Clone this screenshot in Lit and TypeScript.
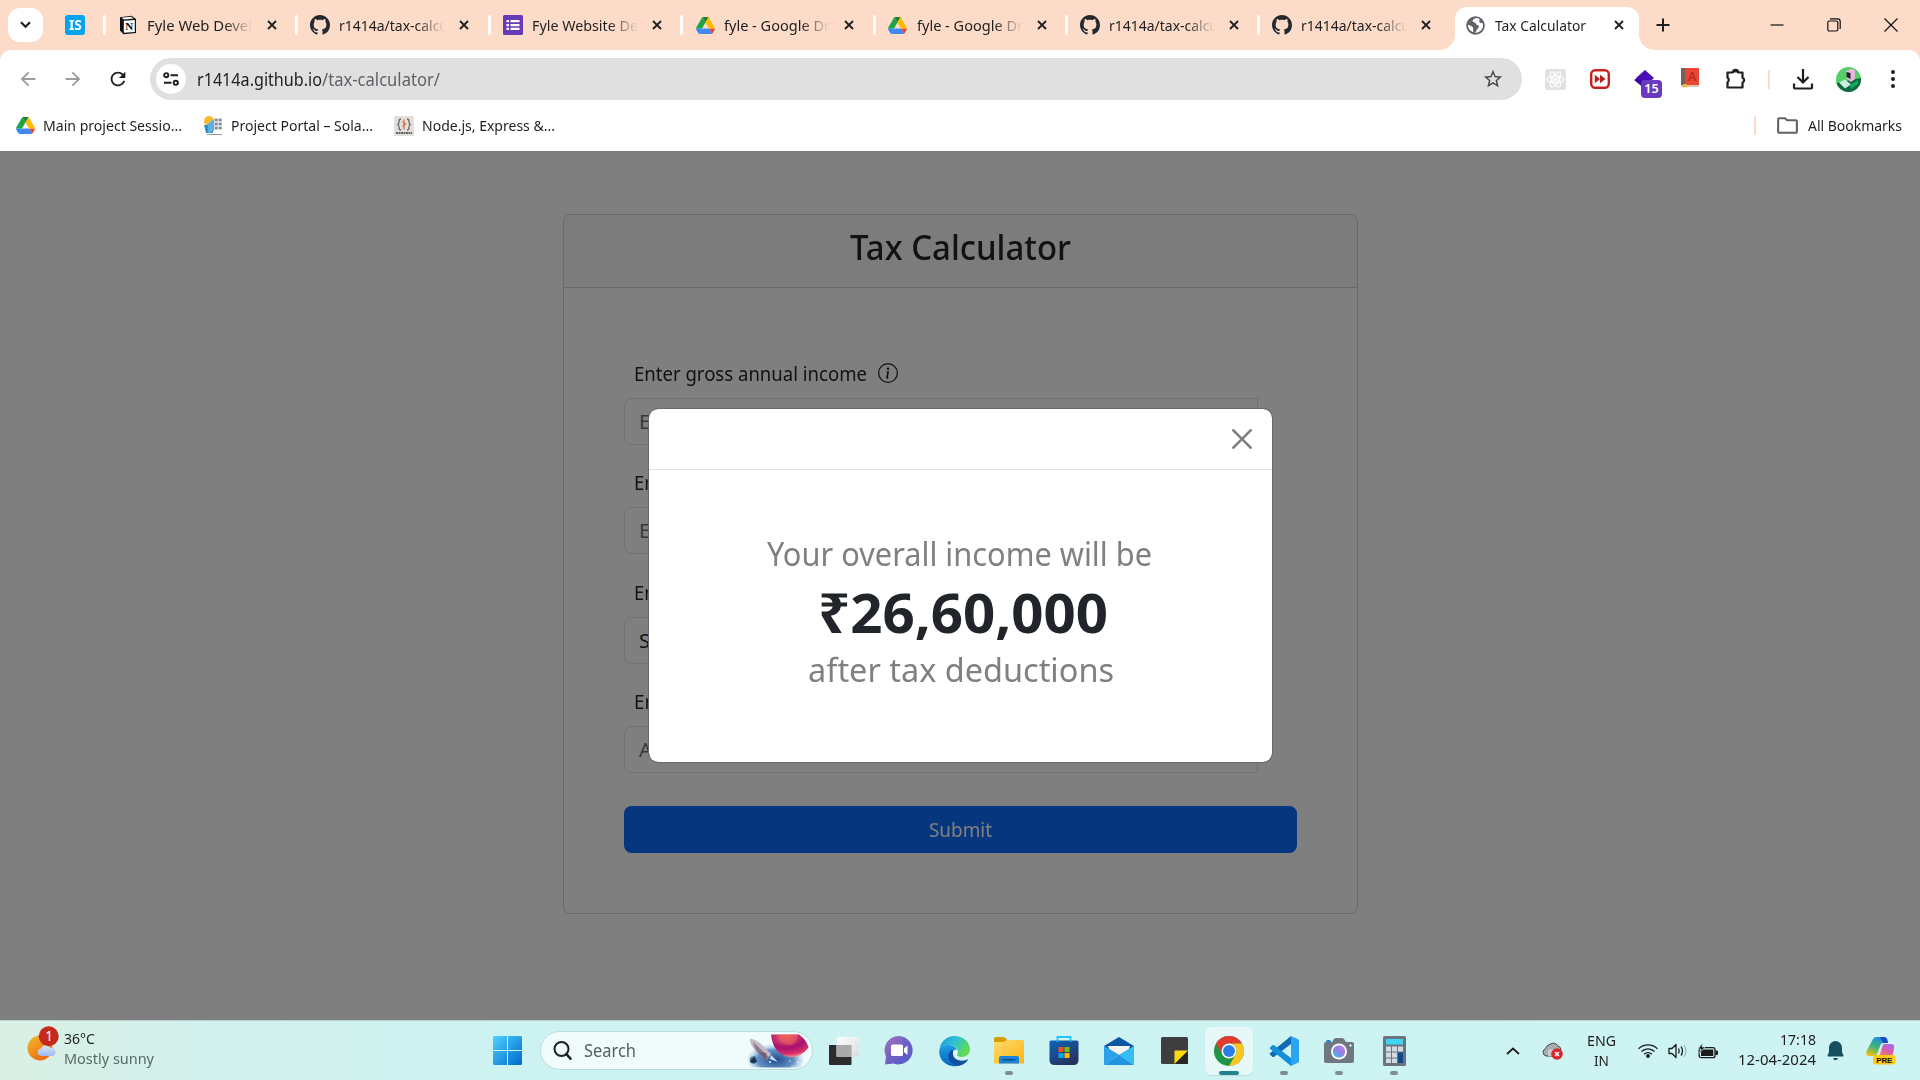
import { LitElement, html, css, svg } from "lit";
import { customElement, property } from "lit/decorators.js";

/* ---------- Text that condenses or widens to a given width ---------- */
@customElement("ui-label")
class UiLabel extends LitElement {
  @property({ type: Number }) w = 0;
  static styles = css`
    :host { display: inline-block; white-space: nowrap; flex: none; }
    span { display: inline-block; transform-origin: 0 50%; white-space: pre; }
  `;
  firstUpdated() {
    const span = this.renderRoot.querySelector("span") as HTMLElement;
    const natural = span.getBoundingClientRect().width;
    if (this.w && natural) {
      span.style.transform = `scaleX(${this.w / natural})`;
      this.style.width = `${this.w}px`;
    }
  }
  render() {
    return html`<span><slot></slot></span>`;
  }
}

/* ---------- Icons ---------- */
const icon = (w: number, h: number, box: string, body: unknown) =>
  html`<svg class="ico" width=${w} height=${h} viewBox=${box} preserveAspectRatio="none">${body}</svg>`;

const github = () => icon(20, 20, "0 0 16 16", svg`<path fill="#24292f" d="M8 0C3.58 0 0 3.58 0 8c0 3.54 2.29 6.53 5.47 7.59.4.07.55-.17.55-.38 0-.19-.01-.82-.01-1.49-2.01.37-2.53-.49-2.69-.94-.09-.23-.48-.94-.82-1.13-.28-.15-.68-.52-.01-.53.63-.01 1.08.58 1.23.82.72 1.21 1.87.87 2.33.66.07-.52.28-.87.51-1.07-1.78-.2-3.64-.89-3.64-3.95 0-.87.31-1.59.82-2.15-.08-.2-.36-1.02.08-2.12 0 0 .67-.21 2.2.82.64-.18 1.32-.27 2-.27s1.36.09 2 .27c1.53-1.04 2.2-.82 2.2-.82.44 1.1.16 1.92.08 2.12.51.56.82 1.27.82 2.15 0 3.07-1.87 3.75-3.65 3.95.29.25.54.73.54 1.48 0 1.07-.01 1.93-.01 2.2 0 .21.15.46.55.38A8.01 8.01 0 0 0 16 8c0-4.42-3.58-8-8-8z"/>`);

const drive = () => icon(19, 17, "0 0 87.3 78", svg`
  <path fill="#2684fc" d="m6.6 66.85 3.85 6.65c.8 1.4 1.95 2.5 3.3 3.3l13.75-23.8h-27.5c0 1.55.4 3.1 1.2 4.5z"/>
  <path fill="#1ea446" d="m43.65 25-13.75-23.8c-1.35.8-2.5 1.9-3.3 3.3l-25.4 44a9.06 9.06 0 0 0 -1.2 4.5h27.5z"/>
  <path fill="#ea4335" d="m73.55 76.8c1.35-.8 2.5-1.9 3.3-3.3l1.6-2.75 7.65-13.25c.8-1.4 1.2-2.95 1.2-4.5h-27.5l5.85 11.5z"/>
  <path fill="#188038" d="m43.65 25 13.75-23.8c-1.35-.8-2.9-1.2-4.5-1.2h-18.5c-1.6 0-3.15.45-4.5 1.2z"/>
  <path fill="#4285f4" d="m59.8 53h-32.3l-13.75 23.8c1.35.8 2.9 1.2 4.5 1.2h50.8c1.6 0 3.15-.45 4.5-1.2z"/>
  <path fill="#ffba00" d="m73.4 26.5-12.7-22c-.8-1.4-1.95-2.5-3.3-3.3l-13.75 23.8 16.15 28h27.45c0-1.55-.4-3.1-1.2-4.5z"/>`);

const notion = () => icon(18, 20, "0 0 18 20", svg`
  <path d="M1 2.2 12.5.8 17 4v14l-12.500 1.200L1 15.500z" fill="#111"/>
  <path d="M2.500 2.800 12 1.800l2.600 1.800L5 4.400z" fill="#fff"/>
  <path d="M4.800 5.800 15.800 5v11.900l-11 .9z" fill="#fff"/>
  <text x="10.300" y="15.200" text-anchor="middle" font-family="Liberation Serif, serif" font-weight="700" font-size="11" fill="#111">N</text>`);

const forms = () => icon(20, 20, "0 0 20 20", svg`
  <rect width="20" height="20" rx="1.500" fill="#673ab7"/>
  <path fill="#fff" d="M3.500 5h2.500v2.300H3.500zM7.500 5h9v2.300h-9zM3.500 8.900h2.500v2.300H3.500zM7.500 8.900h9v2.300h-9zM3.500 12.800h2.500v2.300H3.500zM7.500 12.800h9v2.300h-9z"/>`);

const globe = () => icon(19, 19, "0 0 20 20", svg`
  <circle cx="10" cy="10" r="9.800" fill="#5f6368"/>
  <path fill="#fff" d="M10.500 2.200c-1.800 1-3.300 1.300-3.600 2.800-.3 1.400 1.300 1.600 2.600 1.900 1 .3.600 1.900 1.800 2.300 1.500.5 2.300.7 2.200 2.200-.1 1.800-2 2.500-2.600 3.800-.5 1-.7 2.200-1.900 2.500 5.300.2 8.900-3.300 8.900-7.700 0-1-.2-2-.6-3-1.300.6-2.700.3-3.200-.8-.5-1 .2-2 .2-3-1.200-.7-2.500-1-3.800-1z" />
  <path fill="#fff" d="M2 9.500c1.300 0 2.600.5 3.800 1.200 1.300.8 1.900 1.200 1.700 2.600-.2 1 0 2 .4 3.700C4.300 16 2 13.200 2 9.500z"/>`);

const closeTab = () => icon(10, 10, "0 0 10 10", svg`<path d="M1 1l8 8M9 1l-8 8" stroke="#1f1f1f" stroke-width="1.800"/>`);

const solar = () => icon(20, 20, "0 0 20 20", svg`
  <circle cx="6" cy="5" r="5" fill="#f9b934"/><path d="M1 9h9v8H3z" fill="#2e8fd0"/>
  <path d="M5 8l6-5v12l-6 2z" fill="#5eb0e0"/><path d="M11 2h8v12h-8z" fill="#d5d8da"/>
  <path d="M12 3h2.500v2H12zM16 3h2.500v2H16zM12 7h2.500v2H12zM16 7h2.500v2H16zM12 11h2.500v2H12zM16 11h2.500v2H16z" fill="#7d8890"/>
  <path d="M4 18.500h15" stroke="#999"/>`);

const nodejs = () => icon(20, 20, "0 0 20 20", svg`
  <rect width="20" height="20" fill="#e3e0dc"/>
  <path d="M7 3c-2 0-2 1-2 2.500S5 8 3.800 8.500C5 9 5 10 5 11.500S5 14 7 14M13 3c2 0 2 1 2 2.500s0 2.500 1.200 3C15 9 15 10 15 11.500s0 2.500-2 2.500" fill="none" stroke="#666" stroke-width="1.300"/>
  <path d="M10 3.500v10M8.500 6l3 2-3 2.500" stroke="#e06a4e" stroke-width="1.300" fill="none"/>
  <path d="M2 17h16" stroke="#666" stroke-width="1.800" stroke-dasharray="2 .5"/>`);

const mat = (d: string, size: number, fill: string) =>
  icon(size, size, "0 0 24 24", svg`<path fill=${fill} d=${d}/>`);

const arrowLeft = "M20 11H7.830l5.590-5.590L12 4l-8 8 8 8 1.410-1.410L7.830 13H20v-2z";
const arrowRight = "M12 4l-1.410 1.410L16.170 11H4v2h12.170l-5.580 5.590L12 20l8-8z";
const reload = "M17.650 6.350A7.958 7.958 0 0 0 12 4c-4.420 0-7.990 3.580-7.990 8s3.570 8 7.990 8c3.730 0 6.840-2.550 7.730-6h-2.080A5.990 5.990 0 0 1 12 18c-3.310 0-6-2.690-6-6s2.690-6 6-6c1.660 0 3.140.690 4.220 1.780L13 11h7V4l-2.350 2.350z";
const star = "M22 9.240l-7.190-.620L12 2 9.190 8.630 2 9.240l5.460 4.730L5.820 21 12 17.270 18.180 21l-1.630-7.030L22 9.240zM12 15.400l-3.760 2.270 1-4.280-3.320-2.880 4.380-.380L12 6.100l1.710 4.040 4.380.380-3.320 2.880 1 4.280L12 15.400z";
const folderPath = "M9.170 6l2 2H20v10H4V6h5.170M10 4H4c-1.100 0-1.990.900-1.990 2L2 18c0 1.100.900 2 2 2h16c1.100 0 2-.900 2-2V8c0-1.100-.900-2-2-2h-8l-2-2z";

const tune = () => icon(16, 14, "0 0 16 14", svg`
  <g fill="none" stroke="#1f1f1f" stroke-width="1.900"><circle cx="3.200" cy="3.200" r="2.100"/><path d="M7.500 3.200H15M1 10.800h7.500"/><circle cx="12.800" cy="10.800" r="2.100"/></g>`);

const reactIcon = () => icon(21, 21, "0 0 21 21", svg`
  <rect width="21" height="21" rx="2" fill="#e2e2e2"/>
  <g fill="none" stroke="#fff" stroke-width="1.100"><ellipse cx="10.500" cy="10.500" rx="8.500" ry="3.300"/><ellipse cx="10.500" cy="10.500" rx="8.500" ry="3.300" transform="rotate(60 10.500 10.500)"/><ellipse cx="10.500" cy="10.500" rx="8.500" ry="3.300" transform="rotate(120 10.500 10.500)"/></g>
  <circle cx="10.500" cy="10.500" r="1.800" fill="#fff"/>`);

const ffIcon = () => icon(20, 20, "0 0 20 20", svg`
  <rect x="1.200" y="1.200" width="17.600" height="17.600" rx="4" fill="#fff" stroke="#c5221f" stroke-width="2.400"/>
  <path d="M4.800 5.800l5.200 4.200-5.200 4.200zM10 5.800l5.500 4.200-5.500 4.200z" fill="#b3201d"/>`);

const layers = () => icon(22, 19, "0 0 22 19", svg`
  <path d="M11 0l9 8-9 8-9-8z" fill="#4a0db5"/><path d="M0 10l3-2 8 7v4z" fill="#37089b"/>`);

const book = () => icon(19, 20, "0 0 19 20", svg`
  <rect x="1" y="0" width="18" height="18" rx="1" fill="#ea4636"/><rect x="1" y="0" width="4" height="17" fill="#75605e"/>
  <path d="M1 17h18v2H1z" fill="#d9c3bc"/><path d="M3 16h4v4l-2-1.500L3 20z" fill="#f3b52c"/>
  <text x="12" y="13" text-anchor="middle" font-family="Liberation Sans, sans-serif" font-weight="700" font-size="12" fill="#bb2a20">A</text>`);

const puzzle = () => icon(22, 22, "0 0 22 22", svg`
  <path d="M2.500 4.500h5.300a2.700 2.700 0 0 1 5.400 0h4.300v5.300a2.500 2.500 0 0 1 0 4.700v5h-15v-5.200a2.700 2.700 0 0 0 0-4.600z" fill="none" stroke="#1f1f1f" stroke-width="2.200" stroke-linejoin="round"/>
  <path d="M8 4.500a2.500 2.500 0 0 1 5 0zM18 10a2.300 2.300 0 0 1 0 4.500z" fill="#1f1f1f"/>`);

const download = () => icon(22, 21, "0 0 22 21", svg`
  <path d="M11 0v13M5.500 8l5.500 5.500L16.500 8M2 14.500v4q0 1 1 1h16q1 0 1-1v-4" fill="none" stroke="#1f1f1f" stroke-width="2.200"/>`);

const avatar = () => icon(25, 25, "0 0 25 25", svg`
  <defs><clipPath id="av"><circle cx="12.500" cy="12.500" r="12.500"/></clipPath></defs>
  <g clip-path="url(#av)"><rect width="25" height="25" fill="#55d069"/><path d="M0 16l25-5v14H0z" fill="#0c6a3e"/>
  <path d="M3 15.500l6-3 6 5-6 4z" fill="#cdeedd"/><path d="M10 4l5-2 4 1v9l-4 3-4-3z" fill="#e6b9dc"/><path d="M10.500 5l4 1v6l-4-2z" fill="#222"/><path d="M14 18l8-5v4l-7 5z" fill="#0fa65c"/></g>`);

const infoIcon = () => icon(20, 20, "0 0 16 16", svg`<g fill="#212529"><path d="M8 15A7 7 0 1 1 8 1a7 7 0 0 1 0 14m0 1A8 8 0 1 0 8 0a8 8 0 0 0 0 16"/><path d="m8.930 6.588-2.290.287-.082.380.450.083c.294.070.352.176.288.469l-.738 3.468c-.194.897.105 1.319.808 1.319.545 0 1.178-.252 1.465-.598l.088-.416c-.200.176-.492.246-.686.246-.275 0-.375-.193-.304-.533zM9 4.500a1 1 0 1 1-2 0 1 1 0 0 1 2 0"/></g>`);

const closeModal = () => icon(20, 20, "0 0 16 16", svg`<path fill="#7f7f7f" d="M.293.293a1 1 0 0 1 1.414 0L8 6.586 14.293.293a1 1 0 1 1 1.414 1.414L9.414 8l6.293 6.293a1 1 0 0 1-1.414 1.414L8 9.414l-6.293 6.293a1 1 0 0 1-1.414-1.414L6.586 8 .293 1.707a1 1 0 0 1 0-1.414z"/>`);

/* Taskbar icons */
const weather = () => icon(34, 36, "0 0 34 36", svg`
  <defs><linearGradient id="sun" x1="0" y1="0" x2=".6" y2="1"><stop offset="0" stop-color="#f2bd2b"/><stop offset="1" stop-color="#ee6a10"/></linearGradient>
  <linearGradient id="cl" x1="0" y1="0" x2="0" y2="1"><stop offset="0" stop-color="#dbe8fb"/><stop offset="1" stop-color="#9db9ee"/></linearGradient></defs>
  <circle cx="13" cy="22" r="12.500" fill="url(#sun)"/>
  <path d="M14 30a3.800 3.800 0 0 1 0-7.500 5 5 0 0 1 9-.8 4 4 0 0 1 2.500 8.300z" fill="url(#cl)"/>
  <circle cx="21.700" cy="10.200" r="10" fill="#c42b1c"/>
  <text x="22" y="15" text-anchor="middle" font-family="Noto Sans, sans-serif" font-size="13.500" fill="#fff">1</text>`);

const start = () => icon(29, 29, "0 0 29 29", svg`
  <defs><linearGradient id="st" gradientUnits="userSpaceOnUse" x1="0" y1="0" x2="29" y2="29"><stop offset="0" stop-color="#4fd2ff"/><stop offset="1" stop-color="#0069c9"/></linearGradient></defs>
  <path fill="url(#st)" d="M1 0h13v14H0V1zM15 0h13l1 1v13H15zM0 15h14v14H1l-1-1zM15 15h14v13l-1 1H15z"/>`);

const glass = () => icon(19, 19, "0 0 19 19", svg`<circle cx="8.500" cy="8" r="7" fill="none" stroke="#1f1f1f" stroke-width="2"/><path d="M13.300 13l4.200 4.700" stroke="#1f1f1f" stroke-width="2.600" stroke-linecap="round"/>`);

const rocket = () => icon(64, 34, "0 0 64 34", svg`
  <defs><radialGradient id="sp" cx=".5" cy=".75" r=".55"><stop offset="0" stop-color="#1c4a8a"/><stop offset=".6" stop-color="#4c7dbb" stop-opacity=".85"/><stop offset="1" stop-color="#bcdff0" stop-opacity="0"/></radialGradient>
  <radialGradient id="pl" cx=".4" cy=".1" r=".9"><stop offset="0" stop-color="#f06a5c"/><stop offset=".55" stop-color="#a80f72"/><stop offset=".85" stop-color="#d92f6b"/><stop offset="1" stop-color="#f2868a"/></radialGradient></defs>
  <path d="M8 8Q34-4 54 12q8 10 2 21.500H6q-8-8 2-25z" fill="url(#sp)"/>
  <path d="M26 .5h28q8 6 9.500 13Q56 24 44 23 28 20 26 .5z" fill="url(#pl)"/><path d="M32 .5q3 10 12 10.500 8 0 9-10.500z" fill="#ee5f5f" opacity=".55"/>
  <path d="M5 4.500q6 1 11 5.500l10 10-4 6-11-9Q5 12 5 4.500z" fill="#c4b9c4"/><path d="M8 8l16 15-2 3-11-9z" fill="#8b7b8d"/><path d="M13 18l9 9-1-8z" fill="#6c5f76"/>
  <path d="M26 21l7 7-8-3z" fill="#bfe4ff"/><circle cx="8.500" cy="26" r="3.800" fill="#4e8496"/><path d="M5 27a4 4 0 0 0 7 0 5 5 0 0 1-2-5z" fill="#1f2f5d"/>
  <g fill="#eee"><circle cx="25" cy="28" r="1"/><circle cx="45" cy="27" r=".7"/><circle cx="53" cy="28" r="1"/><circle cx="47" cy="32" r=".6"/></g>`);

const taskview = () => icon(30, 28, "0 0 30 28", svg`
  <defs><linearGradient id="tv" x1="0" y1="0" x2="1" y2="1"><stop offset="0" stop-color="#fff"/><stop offset="1" stop-color="#d9dcdc"/></linearGradient></defs>
  <rect x="0" y="8" width="22.500" height="20" rx="1" fill="#2c2c2c"/><rect x="7.500" y="0" width="22.500" height="20" rx="1" fill="url(#tv)" opacity=".92"/><rect x="7.500" y="8" width="15" height="12" fill="#aaa"/>`);

const chat = () => icon(30, 29, "0 0 30 29", svg`
  <defs><linearGradient id="ch" x1="0" y1="0" x2="1" y2="1"><stop offset="0" stop-color="#a573b8"/><stop offset=".5" stop-color="#6f60c4"/><stop offset="1" stop-color="#5159ce"/></linearGradient></defs>
  <path d="M15 0a14.200 14.200 0 1 1-5.500 27.500L1 28.500l1-8A14.200 14.200 0 0 1 15 0z" fill="url(#ch)"/>
  <rect x="7" y="8.500" width="12" height="11.500" rx="1.500" fill="#fff"/><path d="M20 12.500l3.500-3v9.500L20 16z" fill="#fff"/>`);

const edge = () => icon(31, 30, "0 0 31 30", svg`
  <defs><linearGradient id="e1" x1="0" y1="0" x2="1" y2=".5"><stop offset="0" stop-color="#1a98db"/><stop offset=".5" stop-color="#2fc0d6"/><stop offset="1" stop-color="#62dc4e"/></linearGradient>
  <linearGradient id="e2" x1="0" y1="0" x2="0" y2="1"><stop offset="0" stop-color="#1b9de2"/><stop offset="1" stop-color="#0a64c0"/></linearGradient></defs>
  <path d="M.5 13C2 4 9 0 15.500 0 25 0 31 7 31 13c0 5-4 8-8 8-3.500 0-5.500-1.400-5-3 1-1.500 1-2.500.5-4-1-3.500-5-5-8.500-5C5 9 2 11 .5 13z" fill="url(#e1)"/>
  <path d="M.5 13Q4 8.500 10 9c4 .3 7 2 8 5-5-1.500-9 3-6.500 8 2 4.500 7 7.500 12 6.300Q19 31 13 30C4 28.500-1 21 .5 13z" fill="url(#e2)"/>
  <path d="M12.500 14c-6 4-3 15.500 8 15.500 4-.8 7-3 9-6.500-6 3.500-15 1.500-15.500-5 0-1.500.5-2.700 1.500-3.800z" fill="#124f9c"/>
  <path d="M14.500 14.500c-1 2-.6 6 4 7.500 3 1 6 .5 8.500-.9-3 .9-7 .3-9-1.100-1-1 1-2 .8-3.500-.2-1.500-2-3-4.300-2z" fill="#e2f5f6"/>`);

const explorer = () => icon(30, 27, "0 0 30 27", svg`
  <defs><linearGradient id="fo" x1="0" y1="0" x2="1" y2="1"><stop offset="0" stop-color="#ffdb6b"/><stop offset="1" stop-color="#fbb417"/></linearGradient></defs>
  <path d="M0 1.500Q0 0 1.500 0H10l3 2.500V7H0z" fill="#d99a06"/><path d="M0 5h9.500l3.500-2H28.500q1.500 0 1.500 1.500V26.500H0z" fill="url(#fo)"/>
  <path d="M5 26.500V21q0-2 2-2h16q2 0 2 2v5.500z" fill="#1583d8"/><rect x="8.500" y="22" width="13" height="1.500" rx=".7" fill="#0a4a8a"/>`);

const store = () => icon(30, 29, "0 0 30 29", svg`
  <defs><linearGradient id="so" x1="0" y1="0" x2=".6" y2="1"><stop offset="0" stop-color="#0a67bd"/><stop offset="1" stop-color="#27315c"/></linearGradient></defs>
  <path d="M8.500 5.500V1h13v4.500" fill="none" stroke="#26c2f5" stroke-width="1.900"/>
  <path d="M.5 6q0-1.500 1.500-1.500h26q1.500 0 1.500 1.500v18q0 5-5 5h-19q-5 0-5-5z" fill="url(#so)"/>
  <path d="M9.500 11H14.500v5H9.500z" fill="#f25022"/><path d="M15.500 11h5v5h-5z" fill="#7fba00"/><path d="M9.500 17H14.500v5H9.500z" fill="#00a4ef"/><path d="M15.500 17h5v5h-5z" fill="#ffb900"/>
  <path d="M8.500 4.500v1.500M21.500 4.500v1.500" stroke="#26c2f5" stroke-width="1.500"/>`);

const mail = () => icon(30, 28, "0 0 30 28", svg`
  <path d="M0 9L15 0l15 9-2 6H2z" fill="#0b57a4"/><path d="M4 9h22l-3 9H7z" fill="#f4f4f4"/>
  <path d="M0 9l15 9 15-9v1l-15 9L0 10z" fill="#1b93e0"/><path d="M30 9v19L15 18z" fill="#35bdf5"/><path d="M0 28l15-10 15 10z" fill="#2096e2"/><path d="M0 9v19l15-10z" fill="#2ba3e8"/>`);

const notes = () => icon(27, 27, "0 0 27 27", svg`
  <rect width="27" height="27" rx="1.500" fill="#3e3e3e"/><path d="M27 13.500V27H13.500z" fill="#262626"/><path d="M13.500 13.500H27L13.500 27z" fill="#fddb0b"/>`);

const chrome = () => icon(30, 30, "0 0 48 48", svg`
  <circle cx="24" cy="24" r="24" fill="#1e9447"/><path d="M3.200 12A24 24 0 0 1 44.800 12H24A12 12 0 0 0 13.600 30z" fill="#e33b2e"/>
  <path d="M44.800 12A24 24 0 0 1 24 48l10.400-18A12 12 0 0 0 24 12z" fill="#fcc521"/><circle cx="24" cy="24" r="12" fill="#fff"/><circle cx="24" cy="24" r="9.500" fill="#2b7de9"/>`);

const vscode = () => icon(30, 30, "0 0 30 30", svg`
  <path d="M1 18.500l2.300 2.200q1 .8 2.200-.2L22 8V0L1 17.200q-.6.700 0 1.300z" fill="#0f6cb4"/>
  <path d="M1 12.800L22 30v-8L5.500 9.500Q4.300 8.500 3.300 9.300L1 11.500q-.6.700 0 1.300z" fill="#148fdc"/>
  <path d="M22 0l7 3.200q1 .5 1 1.600v20.400q0 1.100-1 1.600L22 30z" fill="#2aa5f2"/>`);

const camera = () => icon(30, 25, "0 0 30 25", svg`
  <defs><linearGradient id="le" x1="1" y1="0" x2=".2" y2="1"><stop offset="0" stop-color="#b08ef0"/><stop offset=".5" stop-color="#9d7be0"/><stop offset="1" stop-color="#35c3ee"/></linearGradient></defs>
  <rect x="2" y="2" width="5" height="4" rx="1.500" fill="#1687c8"/><path d="M0 6q0-2 2-2h6l2-3q.6-1 2-1h6q1.400 0 2 1l2 3h6q2 0 2 2v17q0 2-2 2H2q-2 0-2-2z" fill="#6f7780"/>
  <circle cx="15" cy="13.500" r="8" fill="#fff"/><circle cx="15" cy="13.500" r="6.200" fill="url(#le)"/><path d="M26.500 6v3M25 7.500h3" stroke="#dde" />`);

const calc = () => icon(23, 30, "0 0 23 30", svg`
  <rect width="23" height="30" rx="1.500" fill="#6b747c"/><rect x="3" y="3" width="17" height="5.500" fill="#3fd6f4"/>
  <path fill="#d3dae2" d="M3 10.500h5v5H3zM9 10.500h5v5H9zM15 10.500h5v5h-5zM3 16.500h5v5H3zM9 16.500h5v5H9zM3 22.500h5v4.500H3zM9 22.500h5v4.500H9z"/><path fill="#0f4a8a" d="M15 16.500h5V27h-5z"/>`);

const chevron = () => icon(14, 8, "0 0 14 8", svg`<path d="M1 7l6-5.500L13 7" fill="none" stroke="#1a1a1a" stroke-width="1.700"/>`);

const cloud = () => icon(21, 18, "0 0 21 18", svg`
  <path d="M4 14a4 4 0 0 1-.5-7.500Q5 3 8 2.200 13-.5 16 4q3 1 3 4l-5 6z" fill="#a9adad" stroke="#444" stroke-width="1"/><path d="M6 8q5-3 11 4l-3 2H6z" fill="#c8cccc"/>
  <circle cx="15" cy="12" r="5.800" fill="#d9262c"/><path d="M13 10l4 4M17 10l-4 4" stroke="#fff" stroke-width="1.500"/>`);

const wifi = () => icon(20, 15, "0 0 20 15", svg`
  <g fill="none" stroke="#1a1a1a" stroke-width="1.300"><path d="M.6 5.800a13.300 13.300 0 0 1 18.800 0M3.500 8.500a9.200 9.200 0 0 1 13 0M6.200 11.200a5.400 5.400 0 0 1 7.600 0"/></g><circle cx="10" cy="13" r="1.900" fill="#1a1a1a"/>`);

const speaker = () => icon(20, 16, "0 0 20 16", svg`
  <g fill="none" stroke="#1a1a1a" stroke-width="1.300" stroke-linejoin="round"><path d="M1 5.500h3L8 1.500v13L4 10.500H1z"/><path d="M10.500 5.500q1.500 2.500 0 5M13 3.500q3 4.500 0 9"/></g><path d="M16 2q4 6 0 12" stroke="#98b3b3" fill="none" stroke-width="1.200"/>`);

const battery = () => icon(20, 16, "0 0 20 16", svg`
  <rect x="1.200" y="4.700" width="15.800" height="10" rx="2" fill="none" stroke="#1a1a1a" stroke-width="1.300"/><rect x="3" y="6.500" width="12.300" height="6.500" fill="#1a1a1a"/><path d="M17.500 7.500h1.500q1 0 1 1v2.500q0 1-1 1h-1.500z" fill="#1a1a1a"/>
  <path d="M4.500 0L0 6h3l-1.500 4.500L7 4H4z" fill="#1a1a1a" stroke="#cdf2f2" stroke-width=".6"/>`);

const bell = () => icon(17, 20, "0 0 17 20", svg`<path d="M8.500 0a6.500 6.500 0 0 1 6.500 6.500V11l1.500 3.500q.3 1-.7 1H1.200q-1 0-.7-1L2 11V6.500A6.500 6.500 0 0 1 8.500 0zM6 17h5q-.5 2.300-2.500 2.300T6 17z" fill="#17505f"/>`);

const copilot = () => icon(30, 29, "0 0 30 29", svg`
  <defs><linearGradient id="c1" x1=".6" y1="0" x2=".2" y2="1"><stop offset="0" stop-color="#1b8fe8"/><stop offset=".5" stop-color="#3fb37c"/><stop offset="1" stop-color="#f3c213"/></linearGradient>
  <linearGradient id="c2" x1=".8" y1="0" x2=".2" y2="1"><stop offset="0" stop-color="#a56bf0"/><stop offset=".5" stop-color="#dd5ba8"/><stop offset="1" stop-color="#f5913e"/></linearGradient></defs>
  <path d="M7 3Q8 1 10.500 1H18q2.500 0 3.200 2.500L22 7h-5q-2 0-3 3l-2.500 7q-1 3-4 3H3q-4 0-2.500-5z" fill="url(#c1)"/><path d="M14 1h4q2.500 0 3.200 2.500L22 7h-5z" fill="#1c49c6"/>
  <path d="M18 8h7q4 0 3 5l-2 8H11q2 0 3-3l2.500-8q.5-2 1.500-2z" fill="url(#c2)"/>
  <rect x="7" y="19" width="22.500" height="9.500" rx="2.500" fill="#ffc91a"/>
  <text x="18.300" y="26.800" text-anchor="middle" font-family="Liberation Sans, sans-serif" font-weight="700" font-size="8" textLength="16" fill="#111">PRE</text>`);

/* ---------- Data ---------- */
const tabs: { icon: () => unknown; title: string; w: number }[] = [
  { icon: notion, title: "Fyle Web Devel", w: 105 },
  { icon: github, title: "r1414a/tax-calcu", w: 109 },
  { icon: forms, title: "Fyle Website De", w: 106 },
  { icon: drive, title: "fyle - Google Dr", w: 106 },
  { icon: drive, title: "fyle - Google Dr", w: 106 },
  { icon: github, title: "r1414a/tax-calcu", w: 109 },
  { icon: github, title: "r1414a/tax-calcu", w: 109 },
];

const apps: { icon: () => unknown; state: string }[] = [
  { icon: taskview, state: "" },
  { icon: chat, state: "" },
  { icon: edge, state: "" },
  { icon: explorer, state: "open" },
  { icon: store, state: "" },
  { icon: mail, state: "" },
  { icon: notes, state: "" },
  { icon: chrome, state: "active" },
  { icon: vscode, state: "open" },
  { icon: camera, state: "open" },
  { icon: calc, state: "open" },
];

@customElement("app-root")
class AppRoot extends LitElement {
  static styles = css`
    :host {
      display: flex; flex-direction: column; width: 1920px; height: 1080px; overflow: hidden;
      font-family: "Noto Sans", "Open Sans", sans-serif; font-size: 15px; color: #1f1f1f; background: #fff;
    }
    * { box-sizing: border-box; }
    .ico { display: block; flex: none; overflow: visible; }

    /* Tab strip */
    .strip { flex: none; height: 50px; background: #fcdbc9; display: flex; align-items: flex-start; }
    .chev { width: 35px; height: 34px; margin: 8px 0 0 8px; border-radius: 12px; background: #fff; display: grid; place-items: center; }
    .pin { width: 20px; height: 20px; margin: 15px 18px 0 22px; border-radius: 3px; background: #00a4ef; color: #fff; font-weight: 700; font-size: 14px; line-height: 20px; text-align: center; }
    .tab { width: 192.4px; height: 50px; display: flex; align-items: center; }
    .tab::before { content: ""; width: 3px; height: 20px; background: #fff; border-radius: 2px; }
    .fav { width: 20px; display: grid; place-items: center; margin: 0 9px 0 12px; }
    .name { width: 110px; line-height: 24px; padding-bottom: 1px; -webkit-mask-image: linear-gradient(90deg, #000 70%, transparent 96%); mask-image: linear-gradient(90deg, #000 70%, transparent 96%); }
    .x { width: 10px; margin-left: 10px; }
    .active-tab { position: relative; width: 184px; height: 43px; margin: 7px 0 0 5px; border-radius: 12px 12px 0 0; background: #fff; display: flex; align-items: center; padding: 0 15px 7px 11px; }
    .active-tab .title { margin-left: 10px; line-height: 24px; padding-bottom: 1px; flex: 1; }
    .active-tab::before, .active-tab::after { content: ""; position: absolute; bottom: 0; width: 15px; height: 15px; }
    .active-tab::before { left: -15px; background: radial-gradient(circle at 0 0, transparent 14.500px, #fff 15px); }
    .active-tab::after { right: -15px; background: radial-gradient(circle at 100% 0, transparent 14.500px, #fff 15px); }
    .plus { margin: 18px 0 0 17px; }
    .win { margin-left: auto; display: flex; align-items: center; height: 49px; gap: 43px; padding-right: 22px; }

    /* Toolbar */
    .chrome { flex: none; height: 101px; background: #fcdbc9; }
    .chrome-in { height: 101px; background: #fff; border-radius: 11px 11px 0 0; }
    .toolbar { height: 58px; display: flex; align-items: center; padding-left: 17px; }
    .nav { display: flex; gap: 23px; width: 133px; }
    .omni { width: 1372px; height: 42px; border-radius: 21px; background: #e0e0e0; display: flex; align-items: center; padding: 0 18.500px 0 6px; }
    .site { width: 30px; height: 30px; border-radius: 50%; background: #fff; display: grid; place-items: center; }
    .url { margin-left: 11px; font-size: 17.500px; flex: 1; line-height: 30px; display: flex; padding-top: 0; }
    .path { color: #5f6368; }
    .exts { flex: 1; display: flex; align-items: center; gap: 24px; padding-left: 23px; }
    .layers { position: relative; }
    .badge { position: absolute; left: 7px; top: 10px; width: 21px; height: 18px; border-radius: 4px; background: #6b39c0; color: #fff; font-weight: 600; font-size: 12.500px; line-height: 18px; text-align: center; }
    .bar { width: 2px; height: 19px; background: #fcdbc9; }
    .exts .bar { margin: 0 -2px 0 -3px; }
    .exts .book { margin: -3px 2px 0 0; }
    .exts .face { margin: 0 6px 0 -2px; }
    .marks { height: 35px; display: flex; align-items: center; padding: 0 18px 0 16px; line-height: 24px; }
    .marks ui-label { padding-bottom: 1px; }
    .mark { display: flex; align-items: center; gap: 8px; margin-right: 21px; }
    .all { margin-left: auto; display: flex; align-items: center; }
    .all .ico { margin: 0 8px 0 19px; }

    /* Page */
    .page { position: relative; height: 869px; background: #fff; font-size: 20px; line-height: 30px; color: #212529; padding-top: 63px; flex: none; }
    .card { width: 795px; height: 700px; margin: 0 auto 0 563px; border: 1px solid #d3d3d3; border-radius: 7px; }
    .head { height: 73px; background: #f8f8f8; border-bottom: 1px solid #d3d3d3; border-radius: 6px 6px 0 0; text-align: center; padding-top: 11px; font-size: 35px; font-weight: 500; line-height: 42px; }
    .form { padding: 70px 60px 0; display: flex; flex-direction: column; }
    .field { height: 109.400px; display: flex; flex-direction: column; }
    .lab { height: 40px; display: flex; gap: 11px; padding: 1px 0 0 9.500px; }
    .lab .ico { margin-top: 4px; }
    .input { width: 634px; height: 47px; border: 1px solid #e0e2e5; border-radius: 7px 0 0 7px; padding: 8px 14px; color: #6a7178; }
    .dark { color: #212529; }
    .submit { width: 673px; height: 47px; margin-top: 10.400px; border: 0; border-radius: 7.500px; background: #0d6efd; color: #fff; text-align: center; padding-top: 9px; line-height: 30px; }
    .backdrop { position: absolute; inset: 0; background: rgba(0, 0, 0, 0.5); }
    .modal { position: absolute; left: 648px; top: 257px; width: 625px; height: 355px; border: 1px solid #696969; border-radius: 10px; background: #fff; background-clip: padding-box; text-align: center; }
    .mhead { height: 61px; border-bottom: 1px solid #dee2e6; display: flex; justify-content: flex-end; align-items: center; padding-right: 20px; }
    .mbody { padding: 60px 3px 0 0; display: flex; flex-direction: column; align-items: center; color: #808080; font-size: 32px; line-height: 48px; }
    .sum { font-size: 54px; line-height: 68px; font-weight: 700; color: #212529; margin-right: 5px; }

    /* Taskbar */
    .task { flex: 1; display: flex; align-items: center; border-top: 1px solid #b9d3d2; background: linear-gradient(90deg, #daf0e4 0, #d2f0ec 200px, #ccf2f1 500px, #cdf3f3 100%); }
    .wx { width: 493px; display: flex; align-items: flex-start; padding-left: 27px; height: 54px; gap: 3px; }
    .wx .ico { margin-top: 2px; }
    .two { display: flex; flex-direction: column; line-height: 20px; padding-top: 4px; }
    .grey { color: #586b69; }
    .startbtn { width: 47px; height: 29px; }
    .search { width: 273px; height: 39px; border-radius: 20px; background: #f0fcfc; border: 1px solid #b9dddc; display: flex; align-items: center; padding: 0 3px 0 12px; font-size: 17.500px; color: #555f5f; }
    .search ui-label { margin-left: 12px; padding-bottom: 1px; }
    .search ui-label + .ico { margin-left: auto; }
    .apps { display: flex; margin-left: 7px; gap: 7px; }
    .app { position: relative; width: 48px; height: 48px; display: grid; place-items: center; border-radius: 6px; }
    .app.active { background: #e6f8f8; box-shadow: 0 1px 1px #b9dcdc; }
    .app.open::after, .app.active::after { content: ""; position: absolute; bottom: 0; left: 20px; width: 8px; height: 4px; border-radius: 2px; background: #7a9090; }
    .app.active::after { left: 14px; width: 20px; background: #23828f; }
    .tray { margin-left: auto; display: flex; align-items: center; padding-right: 24px; }
    .cloud { margin-left: 22px; }
    .lang { width: 30px; margin: 0 22px 1px 23px; display: flex; flex-direction: column; align-items: center; line-height: 20px; }
    .net { display: flex; gap: 10px; align-items: center; }
    .clock { display: flex; flex-direction: column; align-items: flex-end; line-height: 20px; margin: 0 11px 4px 20px; }
    .pilot { margin-left: 22px; }
  `;

  private field(label: string, lw: number, value: string, info = false, dark = false) {
    return html`<div class="field">
      <div class="lab"><ui-label w=${lw}>${label}</ui-label>${info ? infoIcon() : ""}</div>
      <div class="input ${dark ? "dark" : ""}">${value}</div>
    </div>`;
  }

  render() {
    return html`
      <div class="strip">
        <div class="chev">${icon(11, 8, "0 0 11 8", svg`<path d="M1 1.200l4.500 4.500L10 1.200" fill="none" stroke="#1f1f1f" stroke-width="2.200"/>`)}</div>
        <div class="pin"><ui-label w="13">IS</ui-label></div>
        ${tabs.map((t) => html`<div class="tab">
          <div class="fav">${t.icon()}</div>
          <div class="name"><ui-label w=${t.w}>${t.title}</ui-label></div>
          <div class="x">${closeTab()}</div>
        </div>`)}
        <div class="active-tab">${globe()}<div class="title"><ui-label w="91">Tax Calculator</ui-label></div>${closeTab()}</div>
        <div class="plus">${icon(14, 14, "0 0 14 14", svg`<path d="M7 .5v13M.5 7h13" stroke="#1f1f1f" stroke-width="2"/>`)}</div>
        <div class="win">
          ${icon(14, 14, "0 0 14 14", svg`<path d="M.5 7h13" stroke="#111" stroke-width="1.200"/>`)}
          ${icon(14, 14, "0 0 14 14", svg`<rect x=".8" y="3" width="10" height="10" rx="1.500" fill="none" stroke="#111" stroke-width="1.200"/><path d="M3 .8h7.500q2.700 0 2.700 2.700V11" fill="none" stroke="#111" stroke-width="1.200"/>`)}
          ${icon(14, 14, "0 0 14 14", svg`<path d="M.5.5l13 13M13.500.5l-13 13" stroke="#111" stroke-width="1.200"/>`)}
        </div>
      </div>

      <div class="chrome"><div class="chrome-in">
        <div class="toolbar">
          <div class="nav">${mat(arrowLeft, 22, "#9b9b9b")}${mat(arrowRight, 22, "#9b9b9b")}${mat(reload, 22, "#1f1f1f")}</div>
          <div class="omni">
            <div class="site">${tune()}</div>
            <div class="url"><ui-label w="125">r1414a.github.io</ui-label><ui-label class="path" w="118">/tax-calculator/</ui-label></div>
            ${mat(star, 22, "#474747")}
          </div>
          <div class="exts">
            ${reactIcon()}${ffIcon()}
            <div class="layers">${layers()}<div class="badge">15</div></div>
            <div class="book">${book()}</div>${puzzle()}<div class="bar"></div>${download()}<div class="face">${avatar()}</div>
            ${icon(4, 18, "0 0 4 18", svg`<g fill="#1f1f1f"><circle cx="2" cy="2" r="2"/><circle cx="2" cy="9" r="2"/><circle cx="2" cy="16" r="2"/></g>`)}
          </div>
        </div>
        <div class="marks">
          <div class="mark">${drive()}<ui-label w="139">Main project Sessio...</ui-label></div>
          <div class="mark">${solar()}<ui-label w="142">Project Portal – Sola...</ui-label></div>
          <div class="mark">${nodejs()}<ui-label w="133">Node.js, Express &amp;...</ui-label></div>
          <div class="all"><div class="bar"></div>${mat(folderPath, 25, "#5f6368")}<ui-label w="94">All Bookmarks</ui-label></div>
        </div>
      </div></div>

      <div class="page">
        <div class="card">
          <div class="head"><ui-label w="221">Tax Calculator</ui-label></div>
          <div class="form">
            ${this.field("Enter gross annual income", 233, "Enter amount", true)}
            ${this.field("Enter extra income", 165, "Enter amount")}
            ${this.field("Enter age group", 140, "Select age", false, true)}
            ${this.field("Enter deductions", 150, "All deductions applicable")}
            <div class="submit"><ui-label w="63">Submit</ui-label></div>
          </div>
        </div>
        <div class="backdrop"></div>
        <div class="modal">
          <div class="mhead">${closeModal()}</div>
          <div class="mbody">
            <ui-label w="385">Your overall income will be</ui-label>
            <ui-label class="sum" w="290">₹26,60,000</ui-label>
            <ui-label w="306">after tax deductions</ui-label>
          </div>
        </div>
      </div>

      <div class="task">
        <div class="wx">${weather()}<div class="two"><ui-label w="31">36°C</ui-label><ui-label class="grey" w="90">Mostly sunny</ui-label></div></div>
        <div class="startbtn">${start()}</div>
        <div class="search">${glass()}<ui-label w="52">Search</ui-label>${rocket()}</div>
        <div class="apps">${apps.map((a) => html`<div class="app ${a.state}">${a.icon()}</div>`)}</div>
        <div class="tray">
          ${chevron()}
          <div class="cloud">${cloud()}</div>
          <div class="lang"><ui-label w="29">ENG</ui-label><ui-label w="15">IN</ui-label></div>
          <div class="net">${wifi()}${speaker()}${battery()}</div>
          <div class="clock"><ui-label w="36">17:18</ui-label><ui-label w="78">12-04-2024</ui-label></div>
          ${bell()}
          <div class="pilot">${copilot()}</div>
        </div>
      </div>
    `;
  }
}
